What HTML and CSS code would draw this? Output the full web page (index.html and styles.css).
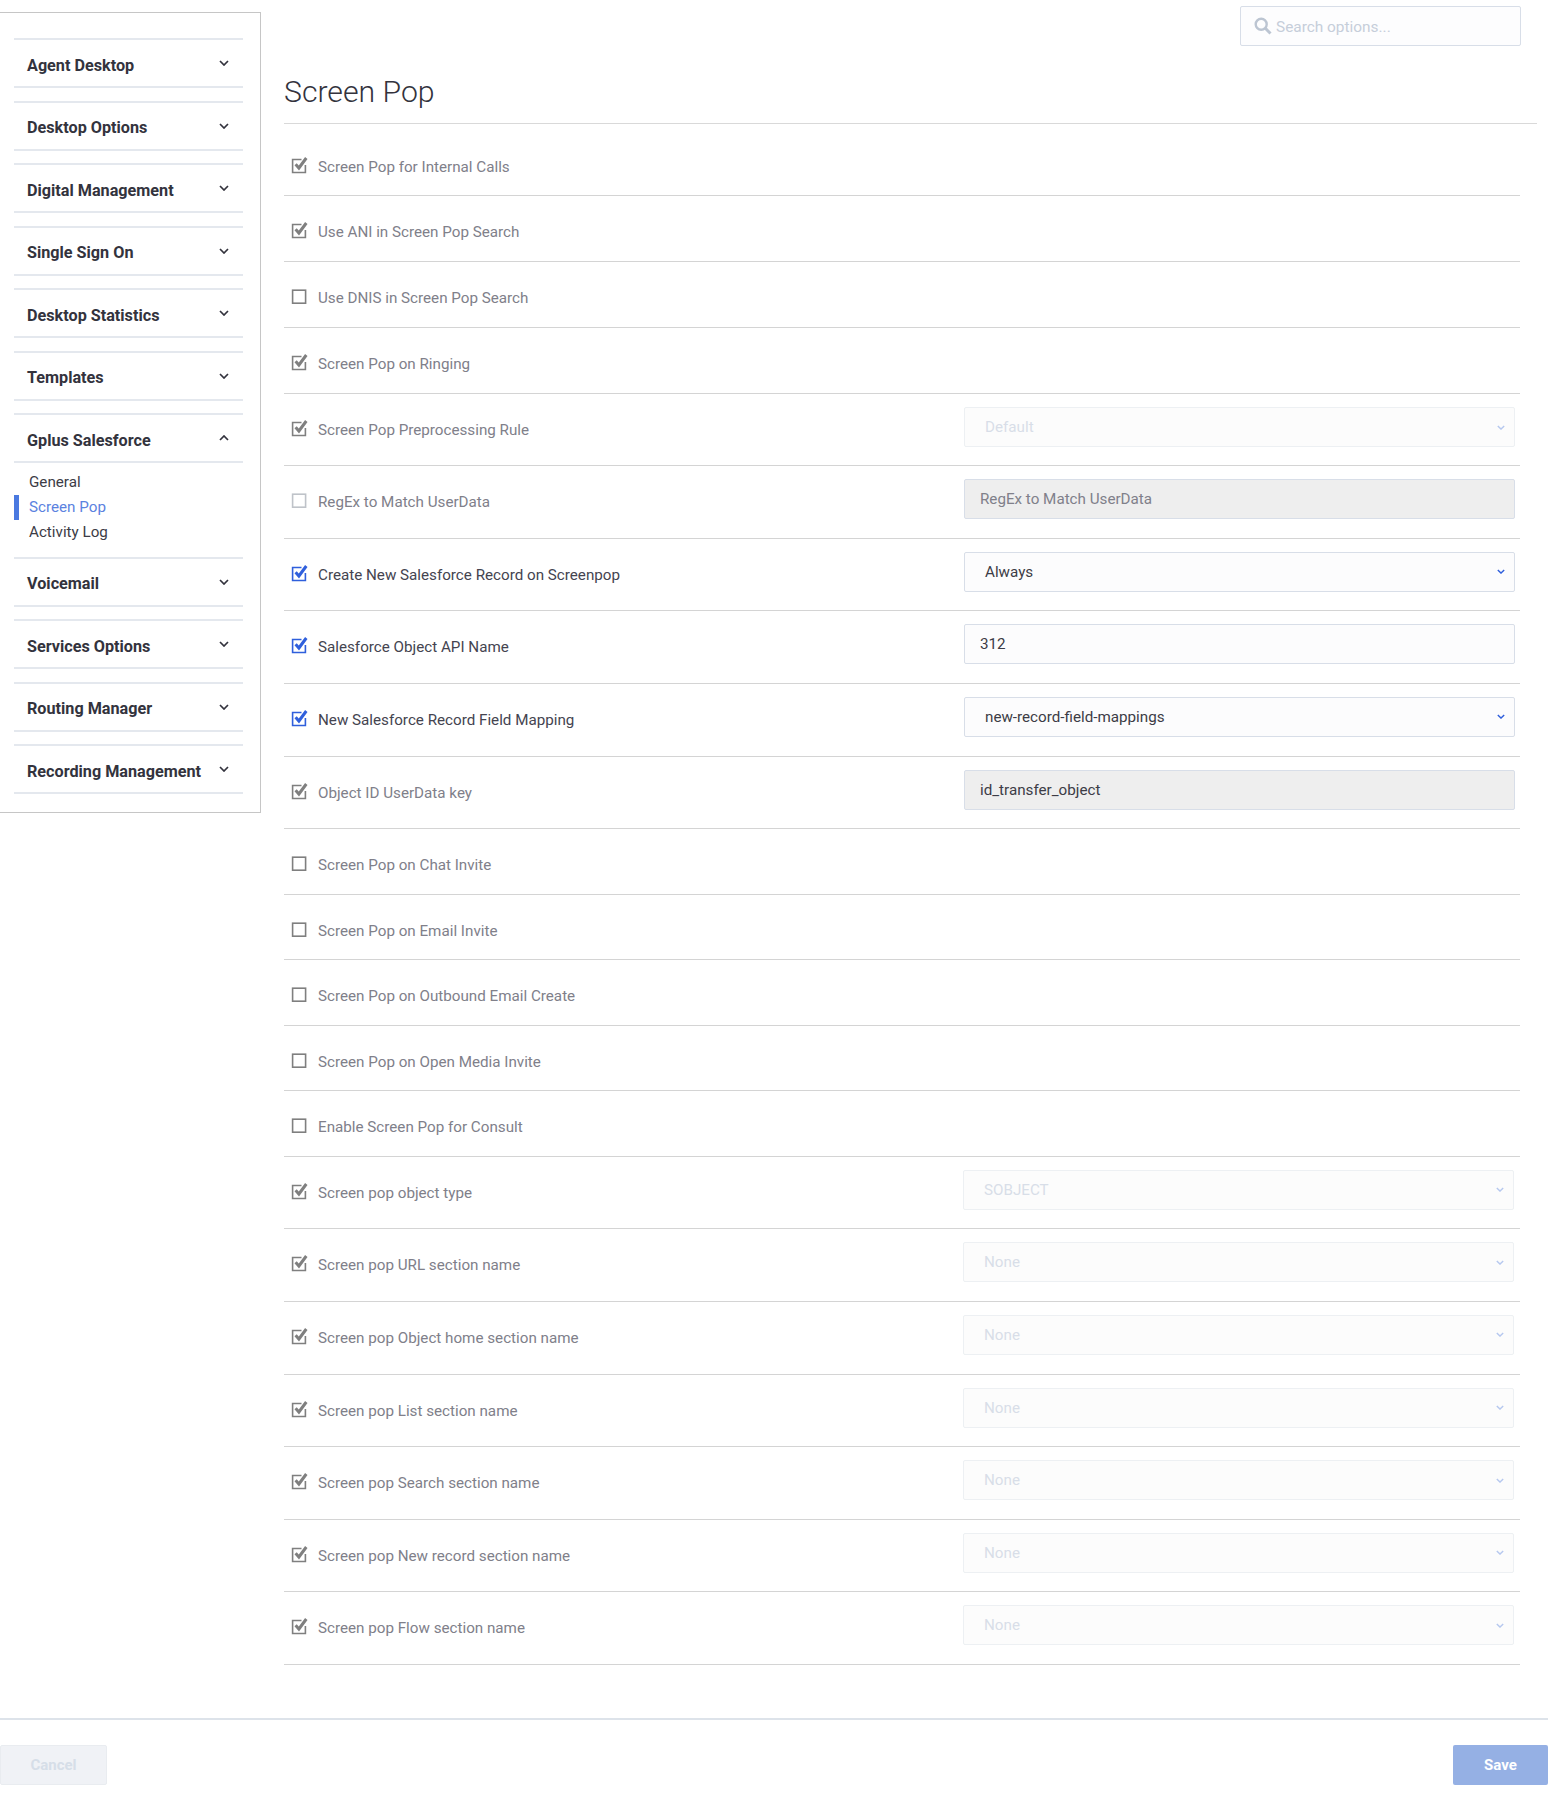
FILE: index.html
```html
<!DOCTYPE html>
<html lang="en">
<head>
<meta charset="utf-8">
<title>Screen Pop</title>
<link rel="stylesheet" href="styles.css">
</head>
<body>
<svg class="defs" width="0" height="0" aria-hidden="true">
  <symbol id="chev" viewBox="0 0 10 6"><path d="M1 1l4 4 4-4" fill="none" stroke="currentColor" stroke-width="1.7"/></symbol>
  <symbol id="on" viewBox="0 0 18 18"><path d="M11.5 3.5H2.6v13h12.8V9" fill="none" stroke="currentColor" stroke-width="1.6"/><path d="M5.6 8.3l3.3 3.7L16.3 2" fill="none" stroke="currentColor" stroke-width="3"/></symbol>
  <symbol id="off" viewBox="0 0 18 18"><rect x="2.6" y="3.2" width="13" height="13" fill="none" stroke="currentColor" stroke-width="1.6"/></symbol>
</svg>
<div class="app">
  <aside class="sidebar">
    <div class="group"><div class="head"><span>Agent Desktop</span><svg class="chev"><use href="#chev"/></svg></div></div>
    <div class="group"><div class="head"><span>Desktop Options</span><svg class="chev"><use href="#chev"/></svg></div></div>
    <div class="group"><div class="head"><span>Digital Management</span><svg class="chev"><use href="#chev"/></svg></div></div>
    <div class="group"><div class="head"><span>Single Sign On</span><svg class="chev"><use href="#chev"/></svg></div></div>
    <div class="group"><div class="head"><span>Desktop Statistics</span><svg class="chev"><use href="#chev"/></svg></div></div>
    <div class="group"><div class="head"><span>Templates</span><svg class="chev"><use href="#chev"/></svg></div></div>
    <div class="group open"><div class="head"><span>Gplus Salesforce</span><svg class="chev up"><use href="#chev"/></svg></div>
      <ul class="sub">
        <li>General</li>
        <li class="active">Screen Pop</li>
        <li>Activity Log</li>
      </ul>
    </div>
    <div class="group"><div class="head"><span>Voicemail</span><svg class="chev"><use href="#chev"/></svg></div></div>
    <div class="group"><div class="head"><span>Services Options</span><svg class="chev"><use href="#chev"/></svg></div></div>
    <div class="group"><div class="head"><span>Routing Manager</span><svg class="chev"><use href="#chev"/></svg></div></div>
    <div class="group"><div class="head"><span>Recording Management</span><svg class="chev"><use href="#chev"/></svg></div></div>
  </aside>
  <main class="main">
    <div class="search">
      <svg class="search-icon" viewBox="0 0 18 18"><circle cx="7.2" cy="7.2" r="5.5" fill="none" stroke="currentColor" stroke-width="2.4"/><path d="M11.3 11.3l5.2 5.2" fill="none" stroke="currentColor" stroke-width="3"/></svg>
      <span>Search options...</span>
    </div>
    <h1 class="title">Screen Pop</h1>
    <div class="rows">
      <div class="row first"><label class="opt"><svg class="box"><use href="#on"/></svg>Screen Pop for Internal Calls</label></div>
      <div class="row"><label class="opt"><svg class="box"><use href="#on"/></svg>Use ANI in Screen Pop Search</label></div>
      <div class="row"><label class="opt"><svg class="box"><use href="#off"/></svg>Use DNIS in Screen Pop Search</label></div>
      <div class="row"><label class="opt"><svg class="box"><use href="#on"/></svg>Screen Pop on Ringing</label></div>
      <div class="row wide short"><label class="opt"><svg class="box"><use href="#on"/></svg>Screen Pop Preprocessing Rule</label><div class="field select disabled"><span>Default</span><svg class="chev-sm"><use href="#chev"/></svg></div></div>
      <div class="row wide"><label class="opt faint"><svg class="box"><use href="#off"/></svg>RegEx to Match UserData</label><div class="field input locked placeholder"><span>RegEx to Match UserData</span></div></div>
      <div class="row wide"><label class="opt live"><svg class="box"><use href="#on"/></svg>Create New Salesforce Record on Screenpop</label><div class="field select"><span>Always</span><svg class="chev-sm"><use href="#chev"/></svg></div></div>
      <div class="row wide"><label class="opt live"><svg class="box"><use href="#on"/></svg>Salesforce Object API Name</label><div class="field input"><span>312</span></div></div>
      <div class="row wide"><label class="opt live"><svg class="box"><use href="#on"/></svg>New Salesforce Record Field Mapping</label><div class="field select"><span>new-record-field-mappings</span><svg class="chev-sm"><use href="#chev"/></svg></div></div>
      <div class="row wide"><label class="opt"><svg class="box"><use href="#on"/></svg>Object ID UserData key</label><div class="field input locked"><span>id_transfer_object</span></div></div>
      <div class="row slim"><label class="opt"><svg class="box"><use href="#off"/></svg>Screen Pop on Chat Invite</label></div>
      <div class="row slim"><label class="opt"><svg class="box"><use href="#off"/></svg>Screen Pop on Email Invite</label></div>
      <div class="row slim"><label class="opt"><svg class="box"><use href="#off"/></svg>Screen Pop on Outbound Email Create</label></div>
      <div class="row slim"><label class="opt"><svg class="box"><use href="#off"/></svg>Screen Pop on Open Media Invite</label></div>
      <div class="row slim"><label class="opt"><svg class="box"><use href="#off"/></svg>Enable Screen Pop for Consult</label></div>
      <div class="row wide tail"><label class="opt"><svg class="box"><use href="#on"/></svg>Screen pop object type</label><div class="field select disabled"><span>SOBJECT</span><svg class="chev-sm"><use href="#chev"/></svg></div></div>
      <div class="row wide tail"><label class="opt"><svg class="box"><use href="#on"/></svg>Screen pop URL section name</label><div class="field select disabled"><span>None</span><svg class="chev-sm"><use href="#chev"/></svg></div></div>
      <div class="row wide tail"><label class="opt"><svg class="box"><use href="#on"/></svg>Screen pop Object home section name</label><div class="field select disabled"><span>None</span><svg class="chev-sm"><use href="#chev"/></svg></div></div>
      <div class="row wide tail"><label class="opt"><svg class="box"><use href="#on"/></svg>Screen pop List section name</label><div class="field select disabled"><span>None</span><svg class="chev-sm"><use href="#chev"/></svg></div></div>
      <div class="row wide tail"><label class="opt"><svg class="box"><use href="#on"/></svg>Screen pop Search section name</label><div class="field select disabled"><span>None</span><svg class="chev-sm"><use href="#chev"/></svg></div></div>
      <div class="row wide tail"><label class="opt"><svg class="box"><use href="#on"/></svg>Screen pop New record section name</label><div class="field select disabled"><span>None</span><svg class="chev-sm"><use href="#chev"/></svg></div></div>
      <div class="row wide tail"><label class="opt"><svg class="box"><use href="#on"/></svg>Screen pop Flow section name</label><div class="field select disabled"><span>None</span><svg class="chev-sm"><use href="#chev"/></svg></div></div>
    </div>
  </main>
</div>
<footer class="footer">
  <button class="btn cancel" type="button">Cancel</button>
  <button class="btn save" type="button">Save</button>
</footer>
</body>
</html>
```
FILE: styles.css
```css
* { box-sizing: border-box; }
html, body { margin: 0; padding: 0; }
body { height: 1800px; background: #fff; font-family: Roboto, "Noto Sans", sans-serif; color: #444; display: flex; flex-direction: column; }
.defs { display: block; height: 0; }
.app { display: flex; align-items: flex-start; flex: 1; }

.sidebar { width: 261px; margin-top: 12px; padding: 25px 17px 17.5px 14px; border: solid #c6c6c6; border-width: 1px 1px 1px 0; flex: none; }
.group { margin-bottom: 12.5px; }
.group:last-child { margin-bottom: 0; }
.group.open { margin-bottom: 0; }
.head { height: 50px; border-top: 2px solid #e4e8ee; border-bottom: 2px solid #e4e8ee; display: flex; align-items: center; justify-content: space-between; padding: 0 14px 0 13px; font-size: 16.2px; font-weight: 700; color: #33333d; }
.head span { position: relative; top: 2px; }
.chev { width: 10px; height: 6px; color: #33333d; }
.chev.up { transform: rotate(180deg); }
.sub { list-style: none; margin: 0; padding: 7px 0 11.5px; font-size: 15.2px; color: #3c3c46; }
.sub li { height: 25px; line-height: 25px; padding-left: 15px; }
.sub li.active { color: #5b82e0; border-left: 5px solid #4a79e0; padding-left: 10px; }

.main { flex: 1; min-width: 0; padding: 6px 11px 0 23px; }
.search { width: 281px; height: 40px; margin-left: 956px; border: 1px solid #d8dee8; border-radius: 2px; background: #fdfdfe; display: flex; align-items: center; padding-left: 13px; gap: 4px; font-size: 15.4px; color: #c6ceda; }
.search span { position: relative; top: 1px; }
.search-icon { width: 18px; height: 18px; color: #bcc5d2; }
.title { margin: 22px 0 0; height: 56px; line-height: 48px; font-size: 30.2px; font-weight: 300; color: #33333d; border-bottom: 1px solid #d9d9d9; }

.rows { width: 1236px; }
.row { display: flex; align-items: flex-start; justify-content: space-between; border-bottom: 1px solid #d4d4d4; height: 66px; padding-right: 5px; }
.row.first { height: 72px; padding-top: 7px; }
.row.wide { height: 72.64px; }
.row.wide.short { height: 72px; }
.row.slim { height: 65.5px; }
.row.tail { padding-right: 6px; }
.opt { display: flex; align-items: center; height: 20px; margin-top: 26px; padding-left: 6px; font-size: 15.2px; color: #80808a; }
.opt.live { color: #444450; }
.box { width: 18px; height: 18px; margin-right: 10px; position: relative; top: -2px; color: #7f7f7f; }
.opt.live .box { color: #2f5fdc; }
.opt.faint .box { color: #bfc3c9; }
.field { width: 551px; height: 40px; margin-top: 13px; border: 1px solid #d8dee8; border-radius: 2px; background: #fcfcfd; display: flex; align-items: center; justify-content: space-between; font-size: 15.2px; color: #3c3c46; }
.field.input { padding-left: 15px; }
.field.select { padding: 0 9px 0 20px; }
.field.locked { background: #eeeeee; }
.field.placeholder { color: #80808a; }
.field.disabled { color: #d8dee8; border-color: #edf0f3; background: #fcfcfc; }
.chev-sm { width: 8px; height: 5px; color: #2f5fdc; }
.field.disabled .chev-sm { color: #b6c8ef; }

.footer { flex: none; height: 82px; border-top: 2px solid #dde3ea; display: flex; justify-content: space-between; padding-top: 25px; }
.btn { height: 40px; border: 0; border-radius: 2px; font-family: inherit; font-size: 15px; font-weight: 700; }
.cancel { width: 107px; background: #f0f2f6; border: 1px solid #e9ecf0; color: #d6dee8; }
.save { width: 95px; background: #95b0e4; color: #fff; }
```
